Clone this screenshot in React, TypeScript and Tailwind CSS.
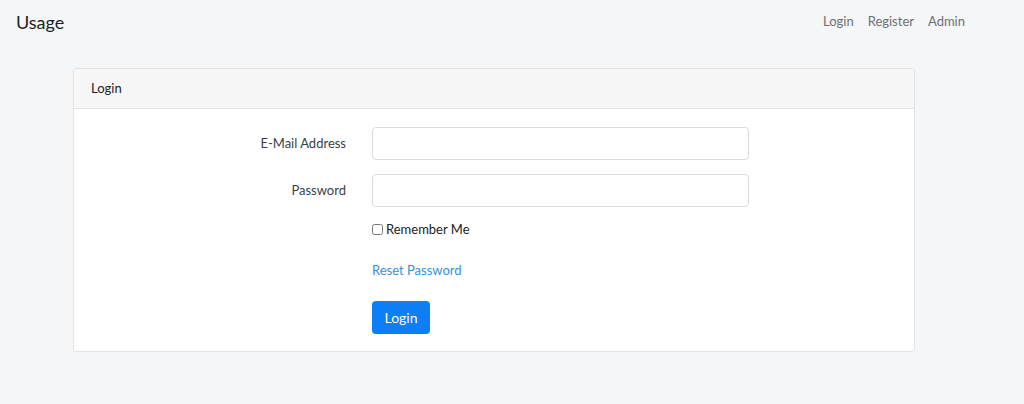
import { useState } from 'react'

export default function App() {
  const [remember, setRemember] = useState(false)

  return (
    <div className="min-h-[404px] bg-[#f5f6f8] font-['Lato','Noto_Sans',sans-serif] text-[#3b3f44]">
      {/* Navbar */}
      <nav className="flex h-[44px] items-center justify-between pl-[16px] pr-[59px]">
        <a href="#" className="text-[18px] text-[#222]">Usage</a>
        <div className="flex items-center gap-[14px] text-[13px] text-[#6c6f73]">
          <a href="#">Login</a>
          <a href="#">Register</a>
          <a href="#">Admin</a>
        </div>
      </nav>

      {/* Card */}
      <div className="ml-[73px] mt-[24px] w-[842px] rounded-[3px] border border-[#e2e3e5] bg-white">
        <div className="flex h-[40px] items-center border-b border-[#e2e3e5] bg-[#f7f7f7] px-[17px] text-[13px] text-[#222]">
          Login
        </div>

        <form className="grid grid-cols-[272px_377px] gap-x-[26px] pt-[18px] pb-[17px]">
          <label className="flex h-[33px] items-center justify-end text-[13px]">E-Mail Address</label>
          <input type="email" className="h-[33px] rounded-[4px] border border-[#d9dbde] bg-white px-3 text-[13px] outline-none" />

          <label className="mt-[14px] flex h-[33px] items-center justify-end text-[13px]">Password</label>
          <input type="password" className="mt-[14px] h-[33px] rounded-[4px] border border-[#d9dbde] bg-white px-3 text-[13px] outline-none" />

          <div />
          <label className="mt-[13px] flex items-center gap-[3px] text-[13px] text-[#222]">
            <input
              type="checkbox"
              checked={remember}
              onChange={(e) => setRemember(e.target.checked)}
              className="m-0 h-[11px] w-[11px]"
            />
            Remember Me
          </label>

          <div />
          <a href="#" className="mt-[21px] text-[13px] text-[#3490dc]">Reset Password</a>

          <div />
          <div className="mt-[21px]">
            <button type="button" className="h-[33px] w-[58px] rounded-[4px] bg-[#0d7ef5] text-[14px] text-white">
              Login
            </button>
          </div>
        </form>
      </div>
    </div>
  )
}
